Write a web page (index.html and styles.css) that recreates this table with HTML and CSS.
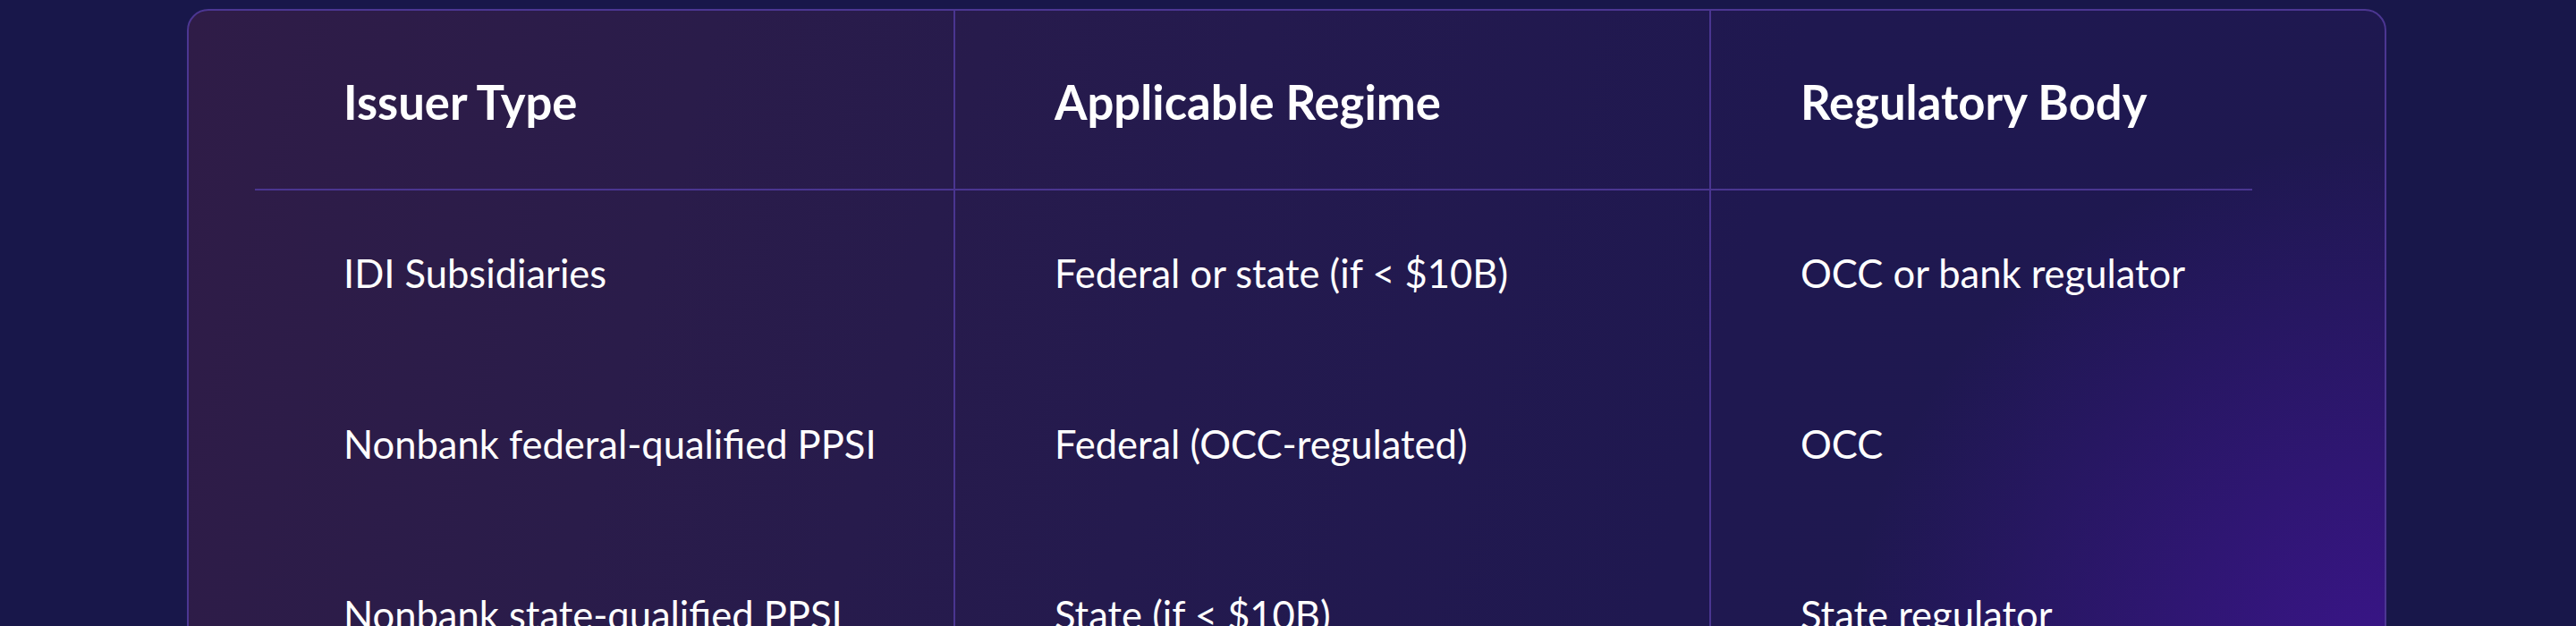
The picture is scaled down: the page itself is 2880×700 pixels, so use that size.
FILE: index.html
```html
<!DOCTYPE html>
<html lang="en">
<head>
<meta charset="utf-8">
<title>Issuer regimes</title>
<link rel="stylesheet" href="styles.css">
</head>
<body>
<main class="page">
  <section class="card">
    <table class="regimes">
      <thead>
        <tr>
          <th class="col col-1">Issuer Type</th>
          <th class="col col-2">Applicable Regime</th>
          <th class="col col-3">Regulatory Body</th>
        </tr>
      </thead>
      <tbody>
        <tr>
          <td class="col col-1">IDI Subsidiaries</td>
          <td class="col col-2">Federal or state (if &lt; $10B)</td>
          <td class="col col-3">OCC or bank regulator</td>
        </tr>
        <tr>
          <td class="col col-1">Nonbank federal-qualified PPSI</td>
          <td class="col col-2">Federal (OCC-regulated)</td>
          <td class="col col-3">OCC</td>
        </tr>
        <tr>
          <td class="col col-1">Nonbank state-qualified PPSI</td>
          <td class="col col-2">State (if &lt; $10B)</td>
          <td class="col col-3">State regulator</td>
        </tr>
      </tbody>
    </table>
  </section>
</main>
</body>
</html>
```

FILE: styles.css
```css
html, body {
  margin: 0;
  padding: 0;
  background: #18174a;
}

body {
  font-family: Lato, "Noto Sans", "Liberation Sans", sans-serif;
  color: #ffffff;
  overflow: hidden;
}

.page {
  padding: 10px 212px 0 209px;
}

.card {
  border: 2px solid #4c3692;
  border-radius: 24px;
  padding: 0 74px 40px;
  background:
    radial-gradient(circle 620px at 2470px 760px, rgba(64, 20, 150, 0.85), rgba(64, 20, 150, 0) 100%),
    linear-gradient(105deg, #2f1c47 0%, #2a1c4a 22%, #241a4e 45%, #1f1850 68%, #1e1850 100%);
}

.regimes {
  border-collapse: separate;
  border-spacing: 0;
  table-layout: fixed;
  width: 2233px;
}

.col {
  box-sizing: border-box;
  text-align: left;
  vertical-align: middle;
}

.col-1 { width: 781px; padding-left: 99px; }
.col-2 { width: 845px; padding-left: 111px; border-left: 2px solid #4a3590; }
.col-3 { width: 607px; padding-left: 100px; border-left: 2px solid #4a3590; }

th {
  font-size: 52.6px;
  font-weight: 700;
  line-height: 62px;
  padding-top: 71px;
  padding-bottom: 66px;
  border-bottom: 2px solid #4a3590;
}

td {
  font-size: 43.5px;
  font-weight: 400;
  line-height: 53px;
  padding-top: 66px;
  padding-bottom: 72px;
  white-space: nowrap;
}
```
